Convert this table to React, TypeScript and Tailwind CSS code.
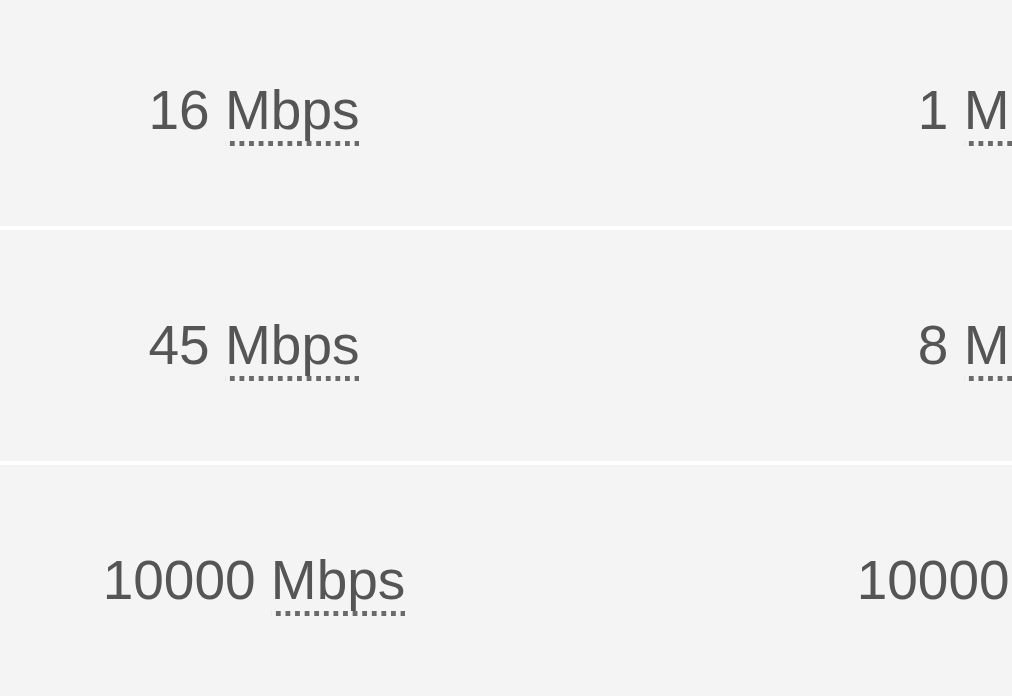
import React from "react";

const rows = [
  ["16", "1"],
  ["45", "8"],
  ["10000", "10000"],
];

function Cell({ n }: { n: string }) {
  return (
    <div className="flex items-center justify-center whitespace-nowrap">
      <span>
        {n}{" "}
        <abbr
          title="Megabits per second"
          className="no-underline pb-[4.6px] bg-[linear-gradient(to_right,#6a6a6a_50%,transparent_50%)] bg-[length:9.6px_4.6px] bg-repeat-x bg-bottom"
        >
          Mbps
        </abbr>
      </span>
    </div>
  );
}

export default function App() {
  return (
    <div
      className="w-[1012px] h-[700px] overflow-hidden bg-[#f4f4f4] text-[#555555] text-[55px]"
      style={{ fontFamily: '"Liberation Sans", Arial, sans-serif' }}
    >
      <div className="-mt-[5px]">
        {rows.map(([a, b], i) => (
          <div
            key={i}
            className="grid grid-cols-[508px_1000px] h-[235px] border-b-4 border-white"
          >
            <Cell n={a} />
            <Cell n={b} />
          </div>
        ))}
      </div>
    </div>
  );
}
